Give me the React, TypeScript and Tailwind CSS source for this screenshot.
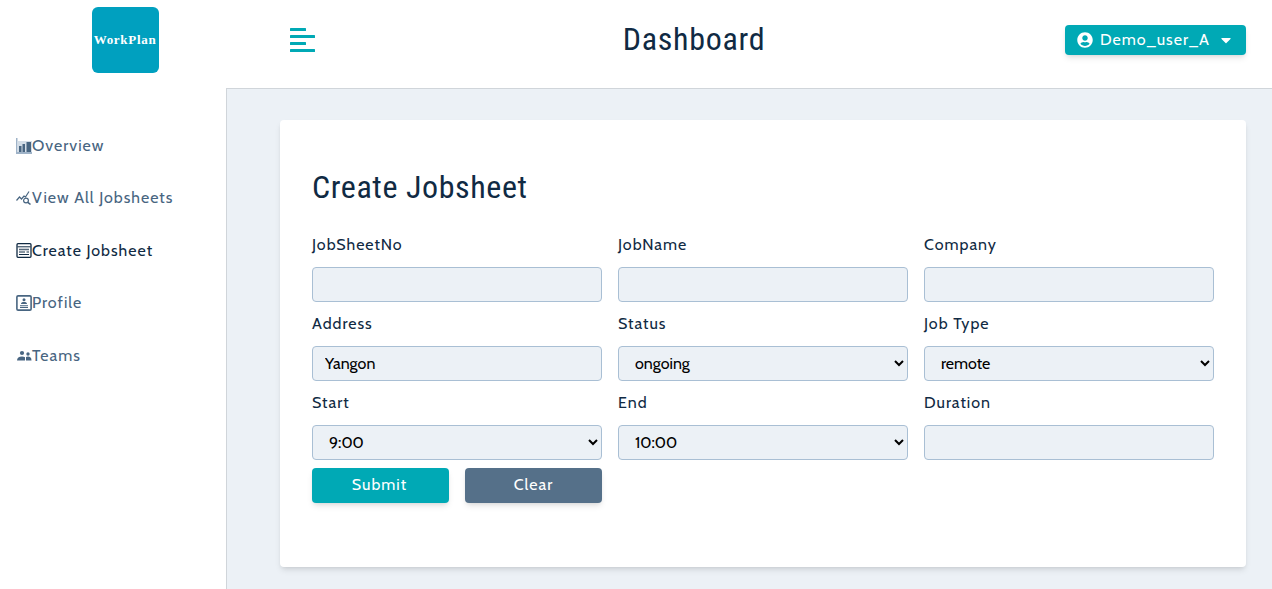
import { FaUserCircle, FaCaretDown } from "react-icons/fa";

const body = "font-['Cabin','Lato','Noto_Sans',sans-serif]";

function OverviewIcon() {
  return (
    <svg width="16" height="16" viewBox="0 0 16 16" className="shrink-0">
      <path d="M0 0h1.500v14H16v2H0z" fill="#9fb3c8" />
      <path d="M1.500 3H16v11H1.500z" fill="#d3dde7" />
      <path d="M3 8h2.500v6H3zM6.500 6H9v8H6.500zM10.500 4H15v10h-4.500z" fill="currentColor" />
    </svg>
  );
}

function ViewIcon() {
  return (
    <svg width="16" height="16" viewBox="0 0 16 16" fill="none" stroke="currentColor" strokeWidth="1.200" className="shrink-0">
      <path d="M0.500 10.500L3.500 7L5.500 9L8 6L9.500 7L13 1.500" />
      <circle cx="10" cy="10.500" r="2.400" />
      <path d="M11.800 12.300L14.500 14.500" strokeWidth="1.600" />
    </svg>
  );
}

function SheetIcon() {
  return (
    <svg width="16" height="16" viewBox="0 0 16 16" fill="none" stroke="currentColor" className="shrink-0">
      <rect x="1" y="0.700" width="14" height="13.600" rx="1" strokeWidth="1.300" />
      <path d="M1.500 3.800h13" strokeWidth="1" />
      <path d="M3 6.500h10" strokeWidth="1.600" opacity="0.700" />
      <path d="M3 9h6M10.500 9H13M3 11.500h10" strokeWidth="1" />
    </svg>
  );
}

function ProfileIcon() {
  return (
    <svg width="16" height="16" viewBox="0 0 16 16" className="shrink-0">
      <rect x="0.900" y="0.900" width="14.200" height="14.200" rx="1.200" fill="none" stroke="currentColor" strokeWidth="1.600" />
      <circle cx="8" cy="4.800" r="1.500" fill="currentColor" />
      <path d="M5 9c0-1.500 1.200-2 3-2s3 .5 3 2zM4 10.200h8v1H4zM4 12h8v1H4z" fill="currentColor" />
    </svg>
  );
}

function TeamsIcon() {
  return (
    <svg width="16" height="16" viewBox="0 0 16 16" fill="currentColor" className="shrink-0">
      <circle cx="6" cy="5" r="2.100" />
      <circle cx="12" cy="6" r="1.700" />
      <path d="M1 12.500c0-2.600 2-4 5-4 1.200 0 2.200.3 3 .8v3.200zM10 9c.5-.3 1.200-.5 2-.5 2 0 3.500 1 3.500 4H10z" />
    </svg>
  );
}

const navItems = [
  { label: "Overview", icon: <OverviewIcon /> },
  { label: "View All Jobsheets", icon: <ViewIcon /> },
  { label: "Create Jobsheet", icon: <SheetIcon />, active: true },
  { label: "Profile", icon: <ProfileIcon /> },
  { label: "Teams", icon: <TeamsIcon /> },
];

function Field({ label, value }: { label: string; value?: string }) {
  return (
    <div className="h-[79px]">
      <label className="block h-[35px] pt-[1px] text-[16px] leading-[24px] tracking-[1px] text-[#102a43]">{label}</label>
      <input
        readOnly
        value={value ?? ""}
        className="block h-[35px] w-full rounded border border-[#a9bfd4] bg-[#ecf1f6] px-3 text-[16px] text-black"
      />
    </div>
  );
}

function SelectField({ label, value }: { label: string; value: string }) {
  return (
    <div className="h-[79px]">
      <label className="block h-[35px] pt-[1px] text-[16px] leading-[24px] tracking-[1px] text-[#102a43]">{label}</label>
      <select
        defaultValue={value}
        className="block h-[35px] w-full rounded border border-[#a9bfd4] bg-[#ecf1f6] px-3 text-[16px] text-black"
      >
        <option>{value}</option>
      </select>
    </div>
  );
}

export default function App() {
  return (
    <div className={`flex h-[589px] w-full overflow-hidden bg-white ${body}`}>
      {/* Sidebar */}
      <aside className="w-[226px] shrink-0 bg-white">
        <div className="flex h-[88px] justify-center pt-[7px] pl-[24px]">
          <div className="flex h-[66px] w-[67px] items-center justify-center rounded-[6px] bg-[#00a0bf]">
            <span className="font-['Liberation_Serif',serif] text-[13px] font-bold tracking-[0.7px] text-white">WorkPlan</span>
          </div>
        </div>
        <nav className="flex flex-col pt-[31.500px] pl-[16px]">
          {navItems.map((item) => (
            <div
              key={item.label}
              className={`flex h-[52.500px] items-center text-[16px] tracking-[1px] ${item.active ? "text-[#102a43]" : "text-[#486581]"}`}
            >
              {item.icon}
              <span>{item.label}</span>
            </div>
          ))}
        </nav>
      </aside>

      <div className="flex min-w-0 flex-1 flex-col">
        {/* Top bar */}
        <header className="flex h-[88px] shrink-0 items-center justify-between bg-white pr-[26px] pb-[8px] pl-[64px]">
          <svg width="25" height="24" viewBox="0 0 25 24" fill="#00a9b5">
            <rect x="0" y="0" width="16" height="3" rx="0.500" />
            <rect x="0" y="7" width="25" height="3" rx="0.500" />
            <rect x="0" y="14" width="16" height="3" rx="0.500" />
            <rect x="0" y="21" width="25" height="3" rx="0.500" />
          </svg>
          <h1 className="mb-[2px] ml-[8px] font-['Roboto_Condensed','Roboto',sans-serif] text-[32px] font-normal tracking-[0.7px] text-[#102a43] [font-stretch:75%]">
            Dashboard
          </h1>
          <button className="flex h-[30px] w-[181px] items-center justify-center gap-[7px] rounded bg-[#00a9b5] text-[16px] tracking-[1px] text-white shadow-md">
            <FaUserCircle className="text-[16px]" />
            <span>Demo_user_A</span>
            <FaCaretDown className="ml-[1px] text-[16px]" />
          </button>
        </header>

        {/* Main */}
        <main className="flex-1 border-t border-l border-[#d0d5da] bg-[#ecf1f6] pt-[31px] pr-[26px] pl-[53px]">
          <section className="h-[447px] rounded bg-white px-[32px] pt-[47px] shadow-md">
            <h3 className="mb-[25px] font-['Roboto_Condensed','Roboto',sans-serif] text-[32px] leading-[40px] font-normal tracking-[0.6px] text-[#102a43] [font-stretch:75%]">
              Create Jobsheet
            </h3>
            <div className="grid grid-cols-3 gap-x-[16px]">
              <Field label="JobSheetNo" />
              <Field label="JobName" />
              <Field label="Company" />
              <Field label="Address" value="Yangon" />
              <SelectField label="Status" value="ongoing" />
              <SelectField label="Job Type" value="remote" />
              <SelectField label="Start" value="9:00" />
              <SelectField label="End" value="10:00" />
              <Field label="Duration" />
              <div className="-mt-[1px] grid grid-cols-2 gap-x-[16px]">
                <button className="h-[35px] rounded bg-[#00a9b5] pr-[2px] pb-[2px] text-[16px] tracking-[1px] text-white shadow-md">Submit</button>
                <button className="h-[35px] rounded bg-[#557089] pb-[2px] text-[16px] tracking-[1px] text-white shadow-md">Clear</button>
              </div>
            </div>
          </section>
        </main>
      </div>
    </div>
  );
}
